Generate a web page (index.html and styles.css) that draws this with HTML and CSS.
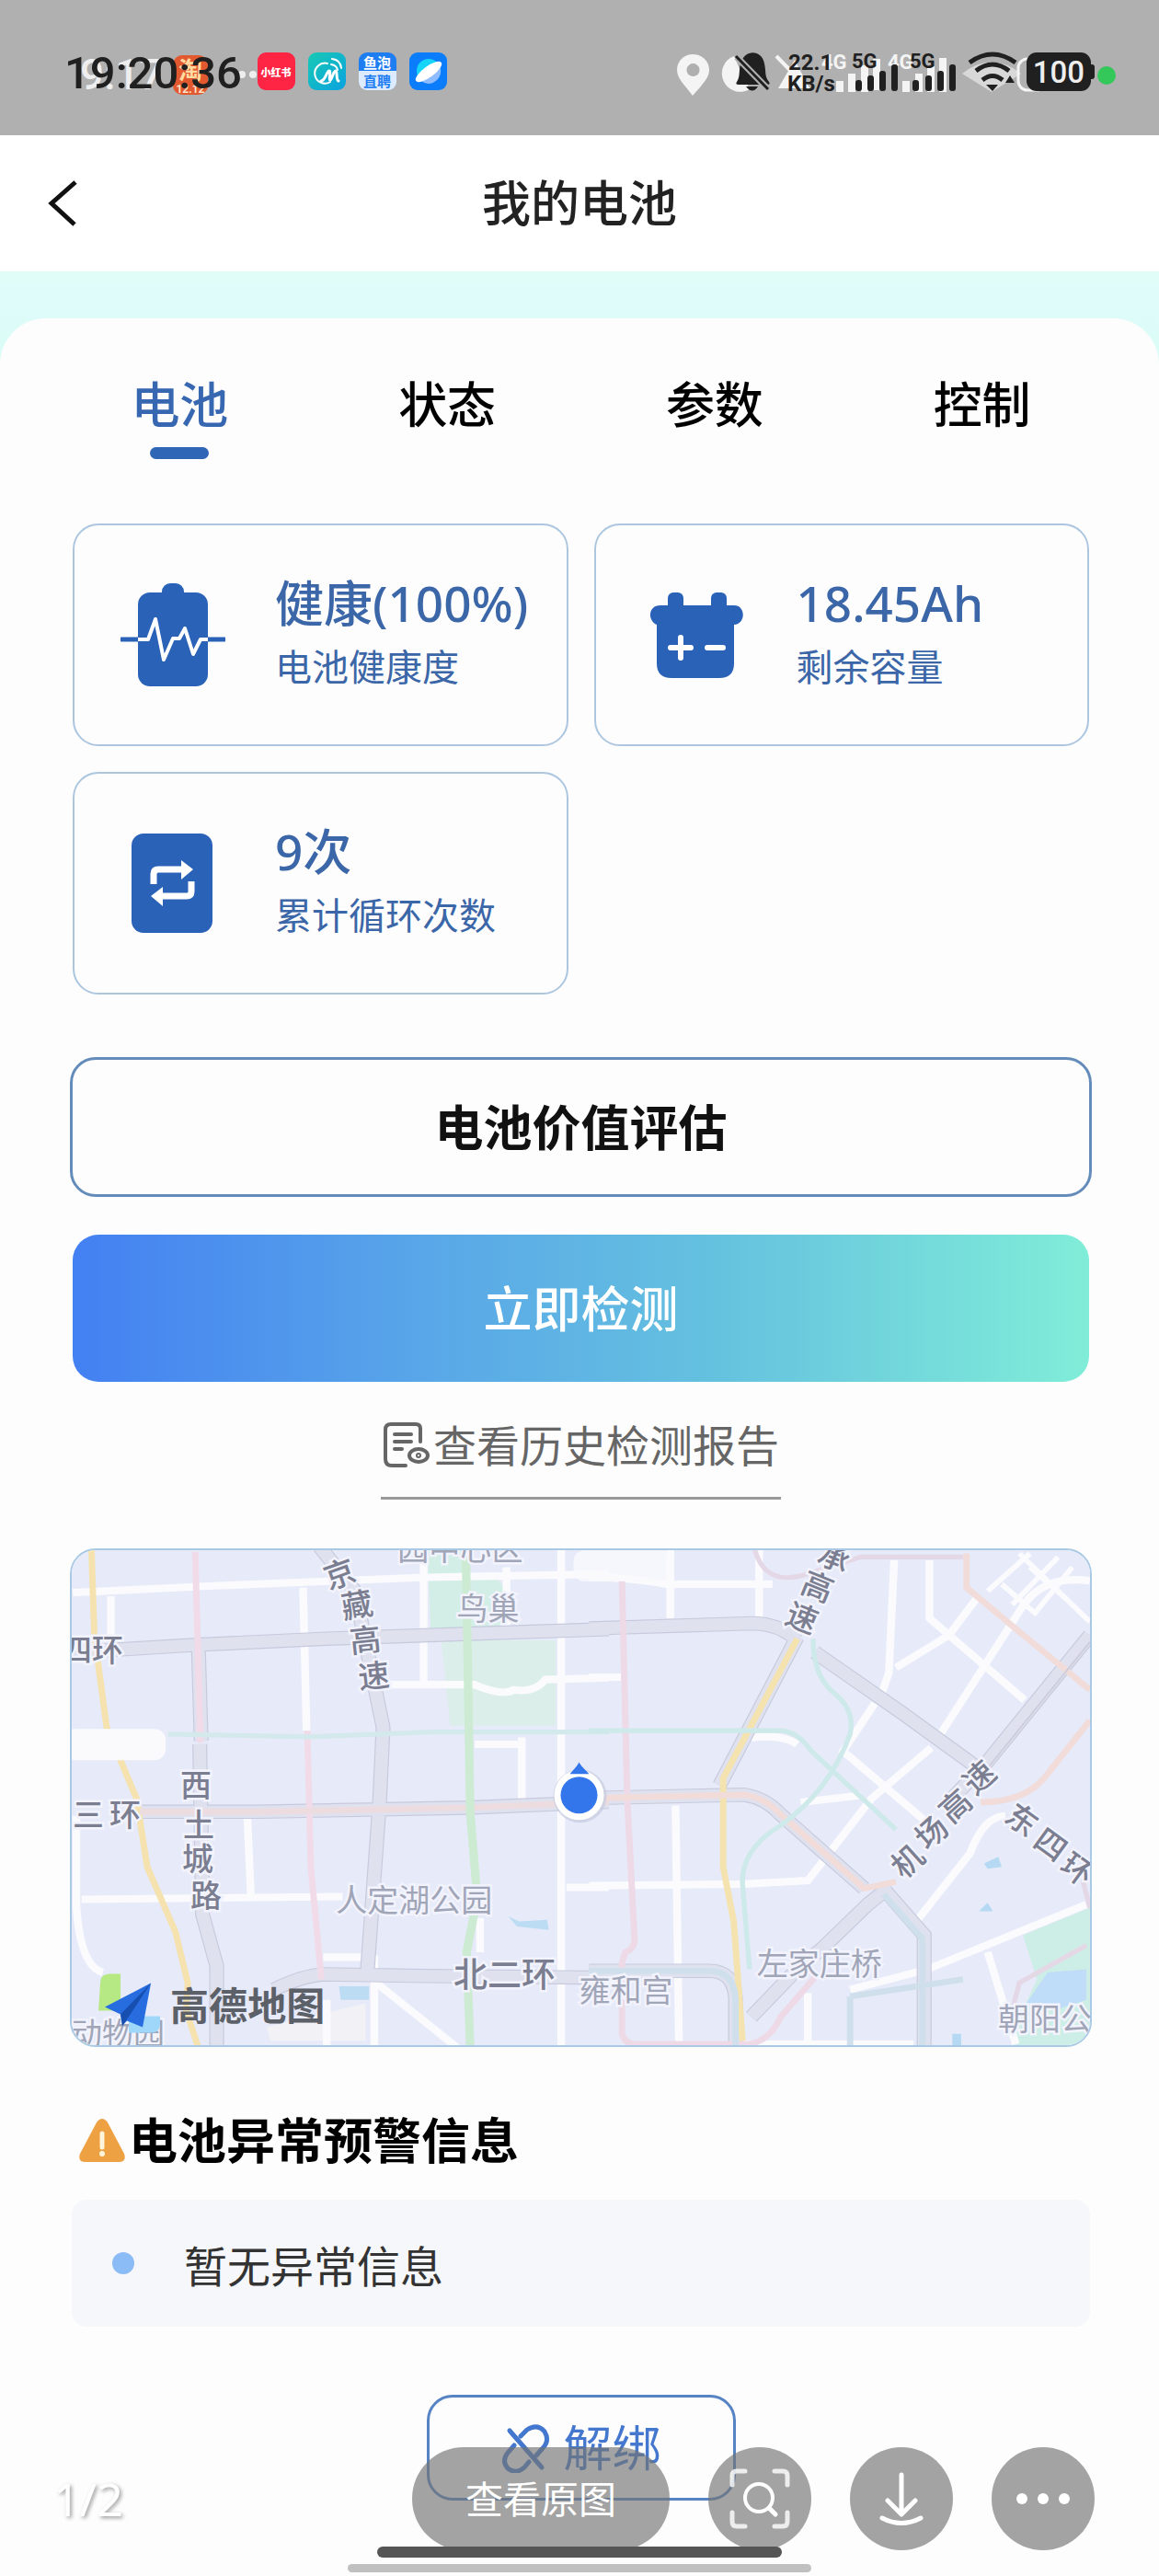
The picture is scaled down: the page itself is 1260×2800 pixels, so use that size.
FILE: index.html
```html
<!DOCTYPE html>
<html lang="zh-CN">
<head>
<meta charset="utf-8">
<meta name="viewport" content="width=device-width, initial-scale=1">
<title>我的电池</title>
<link rel="stylesheet" href="styles.css">
</head>
<body>
<div class="screen">
  <div class="status">
    <svg class="status-ghost" width="300" height="60" viewBox="0 0 300 60" aria-hidden="true">
      <text x="17" y="47" class="ghost-time">9:17</text>
      <rect x="118" y="10" width="38" height="43" rx="10" fill="#e2592f"/>
      <text x="137" y="36" class="ghost-tao">淘</text>
      <text x="137" y="51" class="ghost-num">12.12</text>
      <circle cx="193" cy="31" r="4" fill="#eee"/><circle cx="205" cy="31" r="4" fill="#eee"/>
    </svg>
    <span class="time">19:20:36</span>
    <div class="apps">
      <svg width="41" height="41" viewBox="0 0 41 41"><rect width="41" height="41" rx="9" fill="#fe2443"/><text x="20" y="26" class="app-red">小红书</text></svg>
      <svg width="41" height="41" viewBox="0 0 41 41"><defs><linearGradient id="teal" x2="1" y2="1"><stop stop-color="#18c9b4"/><stop offset="1" stop-color="#0aa2e0"/></linearGradient></defs><rect width="41" height="41" rx="9" fill="url(#teal)"/><g fill="none" stroke="#fff" stroke-linecap="round"><path d="M21 12A11 11 0 1 0 24 32" stroke-width="2"/><path d="M14 31C19 31 20 20 23 20c2 0-1 10 1 10 2 0 3-10 6-10 2 0 0 10 3 11" stroke-width="3"/><path d="M25 13q6 1 7 6M26 7q9 1 10 10" stroke-width="2"/></g></svg>
      <svg width="41" height="41" viewBox="0 0 41 41"><path d="M0 20V9a9 9 0 0 1 9-9h23a9 9 0 0 1 9 9v11z" fill="#1f7df2"/><path d="M0 20h41v12a9 9 0 0 1-9 9H9a9 9 0 0 1-9-9z" fill="#dcebff"/><text x="20" y="17" class="app-yu white">鱼泡</text><text x="20" y="37" class="app-yu blue">直聘</text></svg>
      <svg width="41" height="41" viewBox="0 0 41 41"><rect width="41" height="41" rx="9" fill="#0b7dfb"/><circle cx="21" cy="20" r="13" fill="#16d5f8"/><path d="M13 31Q22 38 31 29Q35 24 34 17z" fill="#8fbcff"/><ellipse cx="21" cy="21" rx="17" ry="6" transform="rotate(-36 21 21)" fill="#fff"/></svg>
    </div>
    <svg class="signals" width="484" height="60" viewBox="730 50 484 60" role="img" aria-label="状态图标">
      <g fill="#f4f4f4">
        <path fill-rule="evenodd" d="M753 59c10 0 18 7 18 17 0 9-8 16-18 28-9-12-17-19-17-28 0-10 8-17 17-17zm0 10a7 7 0 1 0 1 0z"/>
        <path d="M798 61a20 20 0 1 0 17 36l-10-20z"/>
        <path d="M846 96l18-31 16 31z"/>
        <path d="M844 61l35 36" stroke="#f4f4f4" stroke-width="4"/>
        <rect x="909" y="88" width="8" height="12"/><rect x="922" y="80" width="8" height="20"/><rect x="936" y="71" width="8" height="29"/><rect x="949" y="64" width="8" height="34"/><rect x="981" y="88" width="8" height="12"/><rect x="995" y="80" width="8" height="20"/><rect x="1008" y="72" width="8" height="28"/><rect x="1021" y="63" width="8" height="37"/>
        <path d="M1046 80q32-25 64 0l-32 20z" opacity=".6"/>
        <rect x="1107" y="64" width="30" height="34" rx="10" fill="none" stroke="#f4f4f4" stroke-width="3"/>
        <text x="893" y="75" class="net">4G</text><text x="965" y="75" class="net">4G</text>
      </g>
      <g fill="#202020">
        <path d="M801 89c4-6 2-12 4-20 5-16 23-15 26 0 2 9 0 14 5 20q2 3-2 3h-31q-4 0-2-3zm10 5h13q-6 9-13 0z"/>
        <path d="M801 62l34 35" stroke="#b0b0b0" stroke-width="7"/><path d="M800 61l35 36" stroke="#202020" stroke-width="3"/>
        <text x="857" y="76" class="speed">22.1</text><text x="856" y="99" class="speed">KB/s</text>
        <text x="926" y="74" class="net">5G</text><text x="989" y="74" class="net">5G</text>
        <rect x="930" y="87" width="7" height="12" rx="3"/><rect x="943" y="82" width="7" height="17" rx="3"/><rect x="956" y="77" width="7" height="22" rx="3"/><rect x="969" y="70" width="7" height="29" rx="3"/>
        <rect x="992" y="87" width="7" height="12" rx="3"/><rect x="1006" y="82" width="7" height="17" rx="3"/><rect x="1019" y="77" width="7" height="22" rx="3"/><rect x="1032" y="70" width="7" height="29" rx="3"/>
        <g fill="none" stroke="#202020" stroke-width="5"><path d="M1054 68q25-18 50 0"/><path d="M1061 77q18-14 36 0"/><path d="M1068 87q11-9 22 0"/></g>
        <path d="M1072 92h13l-6 7z"/><path d="M1093 90l5-8 5 8z"/>
        <rect x="1116" y="57" width="70" height="42" rx="11"/><rect x="1182" y="70" width="8" height="16" rx="3"/>
        <circle cx="1203" cy="82" r="10" fill="#34c759"/>
      </g>
      <text x="1151" y="90" class="charge">100</text>
    </svg>
  </div>

  <header class="nav">
    <button class="back" aria-label="返回"><svg width="36" height="50" viewBox="0 0 36 50"><path d="M32 2L6 25l25 23" fill="none" stroke="#111" stroke-width="5"/></svg></button>
    <h1 class="nav-title">我的电池</h1>
  </header>

  <main class="stage">
    <div class="panel">
      <nav class="tabs">
        <button class="tab active">电池</button>
        <button class="tab">状态</button>
        <button class="tab">参数</button>
        <button class="tab">控制</button>
      </nav>

      <section class="cards">
        <div class="card">
          <svg class="card-icon" width="114" height="114" viewBox="0 0 114 114"><rect x="45" y="1" width="24" height="24" rx="9" fill="#2a62b8"/><rect x="19" y="11" width="76" height="102" rx="13" fill="#2a62b8"/><path d="M1 62h18M95 62h18" stroke="#2a62b8" stroke-width="5" stroke-linecap="round"/><path d="M19 62h11l8-22 9 44 10-23h7l6-11 9 28 8-16h8" fill="none" stroke="#fff" stroke-width="4" stroke-linejoin="round"/></svg>
          <div><p class="value">健康(100%)</p><p class="name">电池健康度</p></div>
        </div>
        <div class="card">
          <svg class="card-icon" width="114" height="114" viewBox="0 0 114 114"><g fill="#2a62b8"><rect x="28" y="11" width="17" height="24" rx="6"/><rect x="75" y="11" width="17" height="24" rx="6"/><path d="M20 25h80c13 0 13 20 0 21v42q0 16-16 16H32q-16 0-16-16V46C6 42 6 25 20 25z"/></g><path d="M42 60v22M31 71h22M71 71h17" stroke="#fff" stroke-width="6" stroke-linecap="round"/></svg>
          <div><p class="value">18.45Ah</p><p class="name">剩余容量</p></div>
        </div>
        <div class="card">
          <svg class="card-icon" width="114" height="114" viewBox="0 0 114 114"><rect x="12" y="3" width="88" height="108" rx="13" fill="#2a62b8"/><path d="M36 58V47q0-5 5-5h25M77 55v11q0 5-5 5H46" fill="none" stroke="#fff" stroke-width="7"/><path d="M66 32l13 10-13 11zM46 61L33 71l13 11z" fill="#fff"/></svg>
          <div><p class="value">9次</p><p class="name">累计循环次数</p></div>
        </div>
      </section>

      <button class="evaluate">电池价值评估</button>
      <button class="detect">立即检测</button>
      <a class="history" href="#history">
        <svg width="52" height="52" viewBox="0 0 52 52" fill="none" stroke="#666" stroke-width="4" stroke-linecap="round"><path d="M26 48H11q-7 0-7-7V9q0-6 6-6h27q5 0 5 5v14"/><path d="M14 14h18M14 22h18M14 30h8"/><ellipse cx="40" cy="37" rx="10" ry="7"/><circle cx="40" cy="37" r="1"/></svg><span>查看历史检测报告</span>
      </a>

      <div class="map">
        <svg viewBox="0 0 1106 538" role="img" aria-label="电池位置地图">
          <rect width="1106" height="538" fill="#e6eaf9"/>
          <!-- parks and water -->
          <g transform="translate(-18 -26) scale(.383 .37)">
            <path d="M1055 70h115v230h-105zM1180 150q90-20 95 50v100h-95z" fill="#d2eee6"/>
            <path d="M1095 335h325v250h-300z" fill="#dbeeea"/>
            <path d="M1285 1145l30 15 80-5 5 30-90-10zM805 1350h85v40h-80z" fill="#bcdcf4"/>
            <path d="M600 1470l280-70v110H610z" fill="#f2f1f6"/>
          </g>
          <g transform="translate(562 -26) scale(.383 .37)">
            <path d="M1420 1120v420h-220l30-120 40-90-40-130z" fill="#cdeee6"/>
            <path d="M1300 1310l110-10v90l-90 30-80-20z" fill="#bfdcf8"/>
            <path d="M1120 990l40-20 10 30-40 5zM1105 1130l25-25 15 25zM1030 1490h25v40h-25z" fill="#b5d9f2"/>
          </g>
          <!-- local streets -->
          <g fill="none" stroke="#fbfbfe" stroke-width="22">
            <g transform="translate(-18 -26) scale(.383 .37)">
              <path d="M50 195l400-20 600-25 520-10M158 205v120M703 180l10 420M1045 70v390M1435 60v1480M940 465h250q80 35 110 15 60 10 90-30l180-5M1190 640h130M1323 620v180M545 855l10 225M75 1095l740-8M1450 1060h120M1205 1150v100M60 850v260q10 180 75 200M760 1265h125M905 1260v280M910 1340l230 190M770 1390v150M1280 120v180"/>
            </g>
            <g transform="translate(562 -26) scale(.383 .37)">
              <path d="M0 150q110 0 220 20h300M230 70v200M482 70v200M0 443h90M865 100l-15 330-20 60M965 100v170l270 240M1100 210l-80 110-150 95M1420 160q-140-20-200 90L990 620M810 520l-90 140 250 220M970 650L800 800 620 1040 440 1050 0 1055M600 810l170-20M460 620q90-10 130 20M245 820l10 720M1180 850q-60 0-100 110L920 1170M1410 1110L960 1300 740 1360M1130 1250l80 270M620 1370v150M420 1520h500"/>
              <path d="M1220 80l200 200M1130 190l120-110M1200 230l130-140M1260 260l110-140M1170 170l100 90M1250 120l110 100" stroke-width="15"/>
            </g>
          </g>
          <!-- ring roads and expressways: grey casing under a lighter fill -->
          <g fill="none" stroke="#c6cadc" stroke-width="42">
            <g transform="translate(-18 -26) scale(.383 .37)"><path d="M50 370l350-22 370-18 420-15 380-13M406 350l8 280M410 640l8 500 40 150v250M750 60l100 130 80 400-10 220-35 500M240 838h330l600-12 400-17M620 1360q80-40 140-45l300 5 510 5"/></g>
            <g transform="translate(562 -26) scale(.383 .37)"><path d="M0 300l460-15q80 0 130 50M590 325L370 760M640 370l250 180 200 150M1420 320l-290 370-120 130M0 798l440-10q60 10 100 55l240 220M850 1060l-60 50-130 130-70 60-130 140M840 1070l110 130v340M0 1305h340q70 0 75 80v150"/></g>
          </g>
          <g fill="none" stroke="#dfe1ef" stroke-width="36">
            <g transform="translate(-18 -26) scale(.383 .37)"><path d="M50 370l350-22 370-18 420-15 380-13M406 350l8 280M410 640l8 500 40 150v250M750 60l100 130 80 400-10 220-35 500M240 838h330l600-12 400-17M620 1360q80-40 140-45l300 5 510 5"/></g>
            <g transform="translate(562 -26) scale(.383 .37)"><path d="M0 300l460-15q80 0 130 50M590 325L370 760M640 370l250 180 200 150M1420 320l-290 370-120 130M0 798l440-10q60 10 100 55l240 220M850 1060l-60 50-130 130-70 60-130 140M840 1070l110 130v340M0 1305h340q70 0 75 80v150"/></g>
          </g>
          <!-- metro lines -->
          <g fill="none" stroke-width="18">
            <g transform="translate(-18 -26) scale(.383 .37)">
              <path d="M103 70l8 250 35 270 85 210 30 200 80 190 35 150-5 80 35 110" stroke="#f5e2ae"/>
              <path d="M397 75l15 560M715 600l10 400 30 330" stroke="#f2dbe8"/>
              <path d="M240 838h330l600-12 400-17" stroke="#ecdcdf"/>
              <path d="M320 610l400 8 350-14h500" stroke="#d3e9ec" stroke-width="14"/>
              <path d="M1165 90l12 750 20 250-30 160 10 280" stroke="#cdebd2" stroke-width="24"/>
            </g>
            <g transform="translate(562 -26) scale(.383 .37)">
              <path d="M93 160l15 640 20 400q5 40-25 50l-10 30v210q10 35 50 30h310q60-10 90-80l100-120" stroke="#eed9e7"/>
              <path d="M590 330L380 740v260l30 160 25 350" stroke="#f4e3ae"/>
              <path d="M0 798l440-10q60 10 100 55l240 220 90-20M1110 810q120 0 180-70l130-170M1070 80v100l150 130 200 170" stroke="#f1dcda"/>
              <path d="M0 600h540q50 0 90 60l240 230M635 330q0 110 60 160 60 50 45 120-60 170-200 270-110 70-105 170l20 250" stroke="#cee9e9" stroke-width="14"/>
              <path d="M835 1080l110 130v330M740 1380v160M740 1380l320-50M0 1305h340q70 0 75 80v150" stroke="#cfe0ec"/>
              <path d="M470 70q30 110 150 70l150-50h290M1410 1230l-190 110-20 80M1400 1040l20 80" stroke="#e5d8e6" stroke-width="14"/>
              <path d="M1420 340l-290 370" stroke="#cdcddd" stroke-width="5"/>
            </g>
          </g>
          <rect x="-8" y="194" width="110" height="34" rx="12" fill="#fafafc"/>
          <rect x="545" y="0" width="108" height="34" rx="12" fill="#fafafc" opacity=".8"/>
          <!-- road names -->
          <g class="road">
            <text x="5" y="121">四</text><text x="39" y="121">环</text>
            <text x="18" y="300">三</text><text x="58" y="300">环</text>
            <text x="135" y="268">西</text><text x="138" y="311">土</text><text x="137" y="348">城</text><text x="146" y="388">路</text>
            <text transform="translate(291 26) rotate(-20)" y="12">京</text><text transform="translate(310 60) rotate(-10)" y="12">藏</text><text transform="translate(319 98) rotate(-6)" y="12">高</text><text transform="translate(328 137) rotate(-6)" y="12">速</text>
            <text transform="translate(828 8) rotate(22)" y="12">承</text><text transform="translate(810 40) rotate(22)" y="12">高</text><text transform="translate(793 74) rotate(22)" y="12">速</text>
            <text transform="translate(908 338) rotate(-42)" y="12">机</text><text transform="translate(934 307) rotate(-42)" y="12">场</text><text transform="translate(960 278) rotate(-42)" y="12">高</text><text transform="translate(986 247) rotate(-42)" y="12">速</text>
            <text transform="translate(1032 293) rotate(36)" y="12">东</text><text transform="translate(1063 320) rotate(36)" y="12">四</text><text transform="translate(1092 347) rotate(36)" y="12">环</text>
            <text x="470" y="475" class="ring">北二环</text>
          </g>
          <g class="place">
            <text x="422" y="11">园中心区</text>
            <text x="452" y="76">鸟巢</text>
            <text x="372" y="393">人定湖公园</text>
            <text x="602" y="491">雍和宫</text>
            <text x="812" y="462">左家庄桥</text>
            <text x="1057" y="522">朝阳公</text>
            <text x="50" y="538">动物园</text>
          </g>
          <!-- map provider mark -->
          <g>
            <path d="M31 470q0-10 10-10h12v40H29z" fill="#b6e884"/><path d="M62 506h34v8q0 10-10 10H62z" fill="#9fd7fb"/>
            <path d="M36 496l50-26-9 48-17-7-5 5-2-12z" fill="#286de0"/><path d="M86 470l-33 34 2 13z" fill="#174fb0"/>
            <text x="107" y="511" class="brand">高德地图</text>
          </g>
          <circle cx="552" cy="267" r="29" fill="#c4cbe0" opacity=".7"/><circle cx="551" cy="266" r="27" fill="#fff"/><path d="M541 243q10-11 10-13 0 2 11 13z" fill="#3375ea"/><circle cx="551" cy="266" r="20" fill="#3375ea"/>
        </svg>
      </div>

      <h2 class="warn-title"><svg width="52" height="50" viewBox="0 0 52 50"><path d="M20 5q6-8 12 0l18 34q3 9-6 9H8q-9 0-6-9z" fill="#eda143"/><path d="M26 17v15" stroke="#fff4dc" stroke-width="5" stroke-linecap="round"/><circle cx="26" cy="39" r="3" fill="#fff4dc"/></svg><span>电池异常预警信息</span></h2>
      <ul class="warn-list"><li>暂无异常信息</li></ul>

      <button class="unbind"><svg width="54" height="54" viewBox="0 0 54 54" fill="none" stroke="#4478cf" stroke-width="5" stroke-linecap="round"><path d="M9 8l35 40"/><path d="M21 14l7-7q11-7 19 2 6 10-2 18l-7 8"/><path d="M14 24l-7 8q-7 9 0 17 9 7 18-1l5-6"/></svg><span>解绑</span></button>
    </div>
  </main>

  <div class="home-bar light"></div>
  <div class="viewer">
    <span class="counter">1/2</span>
    <button class="original">查看原图</button>
    <button class="round" aria-label="识图"><svg width="66" height="66" viewBox="0 0 66 66" fill="none" stroke="#fff" stroke-linecap="round"><path d="M3 18V8q0-5 5-5h9M49 3h9q5 0 5 5v10M63 48v10q0 5-5 5h-9M17 63H8q-5 0-5-5V48" stroke-width="5" opacity=".8"/><circle cx="32" cy="32" r="15" stroke-width="4"/><path d="M43 43l7 7" stroke-width="5"/></svg></button>
    <button class="round" aria-label="下载"><svg width="66" height="66" viewBox="0 0 66 66" fill="none" stroke="#fff" stroke-width="5" stroke-linecap="round" stroke-linejoin="round"><path d="M33 7v42M18 35l15 15 15-15M12 54q21 11 42 0"/></svg></button>
    <button class="round" aria-label="更多"><svg width="66" height="66" viewBox="0 0 66 66" fill="#fff"><circle cx="10" cy="33" r="6"/><circle cx="33" cy="33" r="6"/><circle cx="56" cy="33" r="6"/></svg></button>
  </div>
  <div class="home-bar dark"></div>
</div>
</body>
</html>
```
FILE: styles.css
```css
* { box-sizing: border-box; }
body, h1, h2, p, ul { margin: 0; padding: 0; }
body {
  background: #fdfdfd;
  color: #111;
  font-family: "Noto Sans", "Noto Sans CJK SC", sans-serif;
}
button { border: 0; padding: 0; background: none; color: inherit; font: inherit; }
svg { display: block; flex: none; }
.screen { position: relative; min-height: 100vh; overflow: hidden; }

/* status bar */
.status {
  position: relative;
  display: flex;
  align-items: flex-start;
  height: 147px;
  padding: 50px 46px 0 70px;
  background: #b0b0b0;
}
.status-ghost { position: absolute; left: 70px; top: 50px; }
.time {
  position: relative;
  width: 210px;
  color: #202020;
  font: 500 49px/60px Roboto, sans-serif;
}
.apps { display: flex; gap: 14px; padding-top: 7px; }
.signals { margin-left: auto; }
.ghost-time { fill: #eee; font: 500 46px Roboto, sans-serif; }
.ghost-tao { fill: #ffd9a0; font: 700 26px "Noto Sans CJK SC", sans-serif; text-anchor: middle; }
.ghost-num { fill: #ffe2c8; font: 700 12px Roboto, sans-serif; text-anchor: middle; }
.app-red { fill: #fff; font: 900 11px "Noto Sans CJK SC", sans-serif; text-anchor: middle; }
.app-yu { font: 700 15px "Noto Sans CJK SC", sans-serif; text-anchor: middle; }
.white { fill: #fff; }
.blue { fill: #1f7df2; }
.speed { font: 700 24px Roboto, sans-serif; }
.net { font: 700 22px Roboto, sans-serif; }
.charge { fill: #eee; font: 500 33px Roboto, sans-serif; text-anchor: middle; }

/* navigation */
.nav {
  display: grid;
  grid-template-columns: 136px 1fr 136px;
  align-items: center;
  height: 148px;
  background: #fff;
}
.back { justify-self: center; }
.nav-title { color: #222; font-size: 53px; font-weight: 500; line-height: 72px; text-align: center; }

.stage { padding-top: 51px; background: linear-gradient(#dffdf4, #e0fcfa 16px, #dafcf7 100px); }
.panel {
  display: flex;
  flex-direction: column;
  padding: 58px 73px 81px 76px;
  border-radius: 50px 50px 0 0;
  background: #fdfdfd;
}

.tabs { display: grid; grid-template-columns: repeat(4, 1fr); margin: 0 -26px; }
.tab {
  display: flex;
  flex-direction: column;
  align-items: center;
  height: 96px;
  color: #000;
  font-size: 53px;
  font-weight: 500;
  line-height: 72px;
}
.tab.active { color: #3767b0; }
.tab.active::after { content: ""; width: 64px; height: 13px; margin-top: 10px; border-radius: 7px; background: #2f66b5; }

.cards { display: grid; grid-template-columns: 1fr 1fr; gap: 28px; margin: 69px 3px 0; }
.card {
  display: flex;
  align-items: center;
  gap: 54px;
  height: 242px;
  padding-left: 50px;
  border: 2px solid #adc6e0;
  border-radius: 28px;
  color: #3b66a8;
  white-space: nowrap;
}
.value { font-size: 53px; font-weight: 500; line-height: 70px; }
.name { font-size: 40px; line-height: 68px; }

.evaluate {
  height: 152px;
  margin-top: 68px;
  padding-bottom: 4px;
  border: 3px solid #648cbb;
  border-radius: 28px;
  font-size: 53px;
  font-weight: 700;
}
.detect {
  height: 160px;
  margin: 41px 3px 0;
  padding-bottom: 4px;
  border-radius: 28px;
  background: linear-gradient(90deg, #4380f2, #59a7e8 35%, #64c0df 62%, #80edd8);
  color: #fff;
  font-size: 53px;
  font-weight: 500;
}
.history {
  display: flex;
  align-items: center;
  align-self: center;
  gap: 4px;
  height: 128px;
  padding: 12px 2px 0 1px;
  border-bottom: 3px solid #999;
  color: #666;
  font-size: 47px;
  line-height: 72px;
  text-decoration: none;
}

.map { margin-top: 53px; overflow: hidden; border: 2px solid #a9c9e4; border-radius: 28px; }
.map svg { width: 100%; height: auto; }
.road, .place {
  font-family: "Noto Sans CJK SC", sans-serif;
  paint-order: stroke;
  stroke: #f2f3fc;
  stroke-width: 5px;
  text-anchor: middle;
}
.road { fill: #7b7e91; font-size: 34px; font-weight: 500; }
.ring { font-size: 37px; }
.place { fill: #a0a5b8; font-size: 34px; }
.brand { fill: #5c6068; font: 700 42px "Noto Sans CJK SC", sans-serif; }

.warn-title {
  display: flex;
  align-items: center;
  gap: 3px;
  margin: 66px 0 0 9px;
  font-size: 53px;
  font-weight: 700;
  line-height: 72px;
  color: #000;
}
.warn-list { margin: 28px 2px 0; border-radius: 16px; background: #f6f7fa; list-style: none; }
.warn-list li {
  display: flex;
  align-items: center;
  gap: 54px;
  height: 138px;
  padding-left: 44px;
  color: #333;
  font-size: 47px;
}
.warn-list li::before { content: ""; width: 24px; height: 24px; border-radius: 50%; background: #8bbcf5; }

.unbind {
  display: flex;
  align-items: center;
  align-self: center;
  justify-content: center;
  gap: 14px;
  width: 336px;
  height: 115px;
  margin-top: 74px;
  border: 3px solid #5683c4;
  border-radius: 28px;
  color: #4478cf;
  font-size: 53px;
  line-height: 72px;
}

/* picture viewer controls floating over the page */
.viewer {
  position: absolute;
  right: 70px;
  bottom: 28px;
  left: 58px;
  display: flex;
  align-items: center;
  gap: 42px;
}
.counter { margin-right: auto; color: #fff; font-size: 50px; line-height: 72px; text-shadow: 2px 2px 4px #999; }
.original, .round { height: 112px; border-radius: 56px; background: rgba(115, 115, 115, .65); color: #fff; }
.original { width: 280px; padding-bottom: 4px; font-size: 41px; }
.round { display: flex; align-items: center; justify-content: center; width: 112px; }
.home-bar { position: absolute; right: 0; left: 0; margin: 0 auto; border-radius: 6px; }
.home-bar.dark { bottom: 20px; width: 440px; height: 12px; background: #555; }
.home-bar.light { bottom: 4px; width: 504px; height: 9px; background: #c0c0c0; }
```
